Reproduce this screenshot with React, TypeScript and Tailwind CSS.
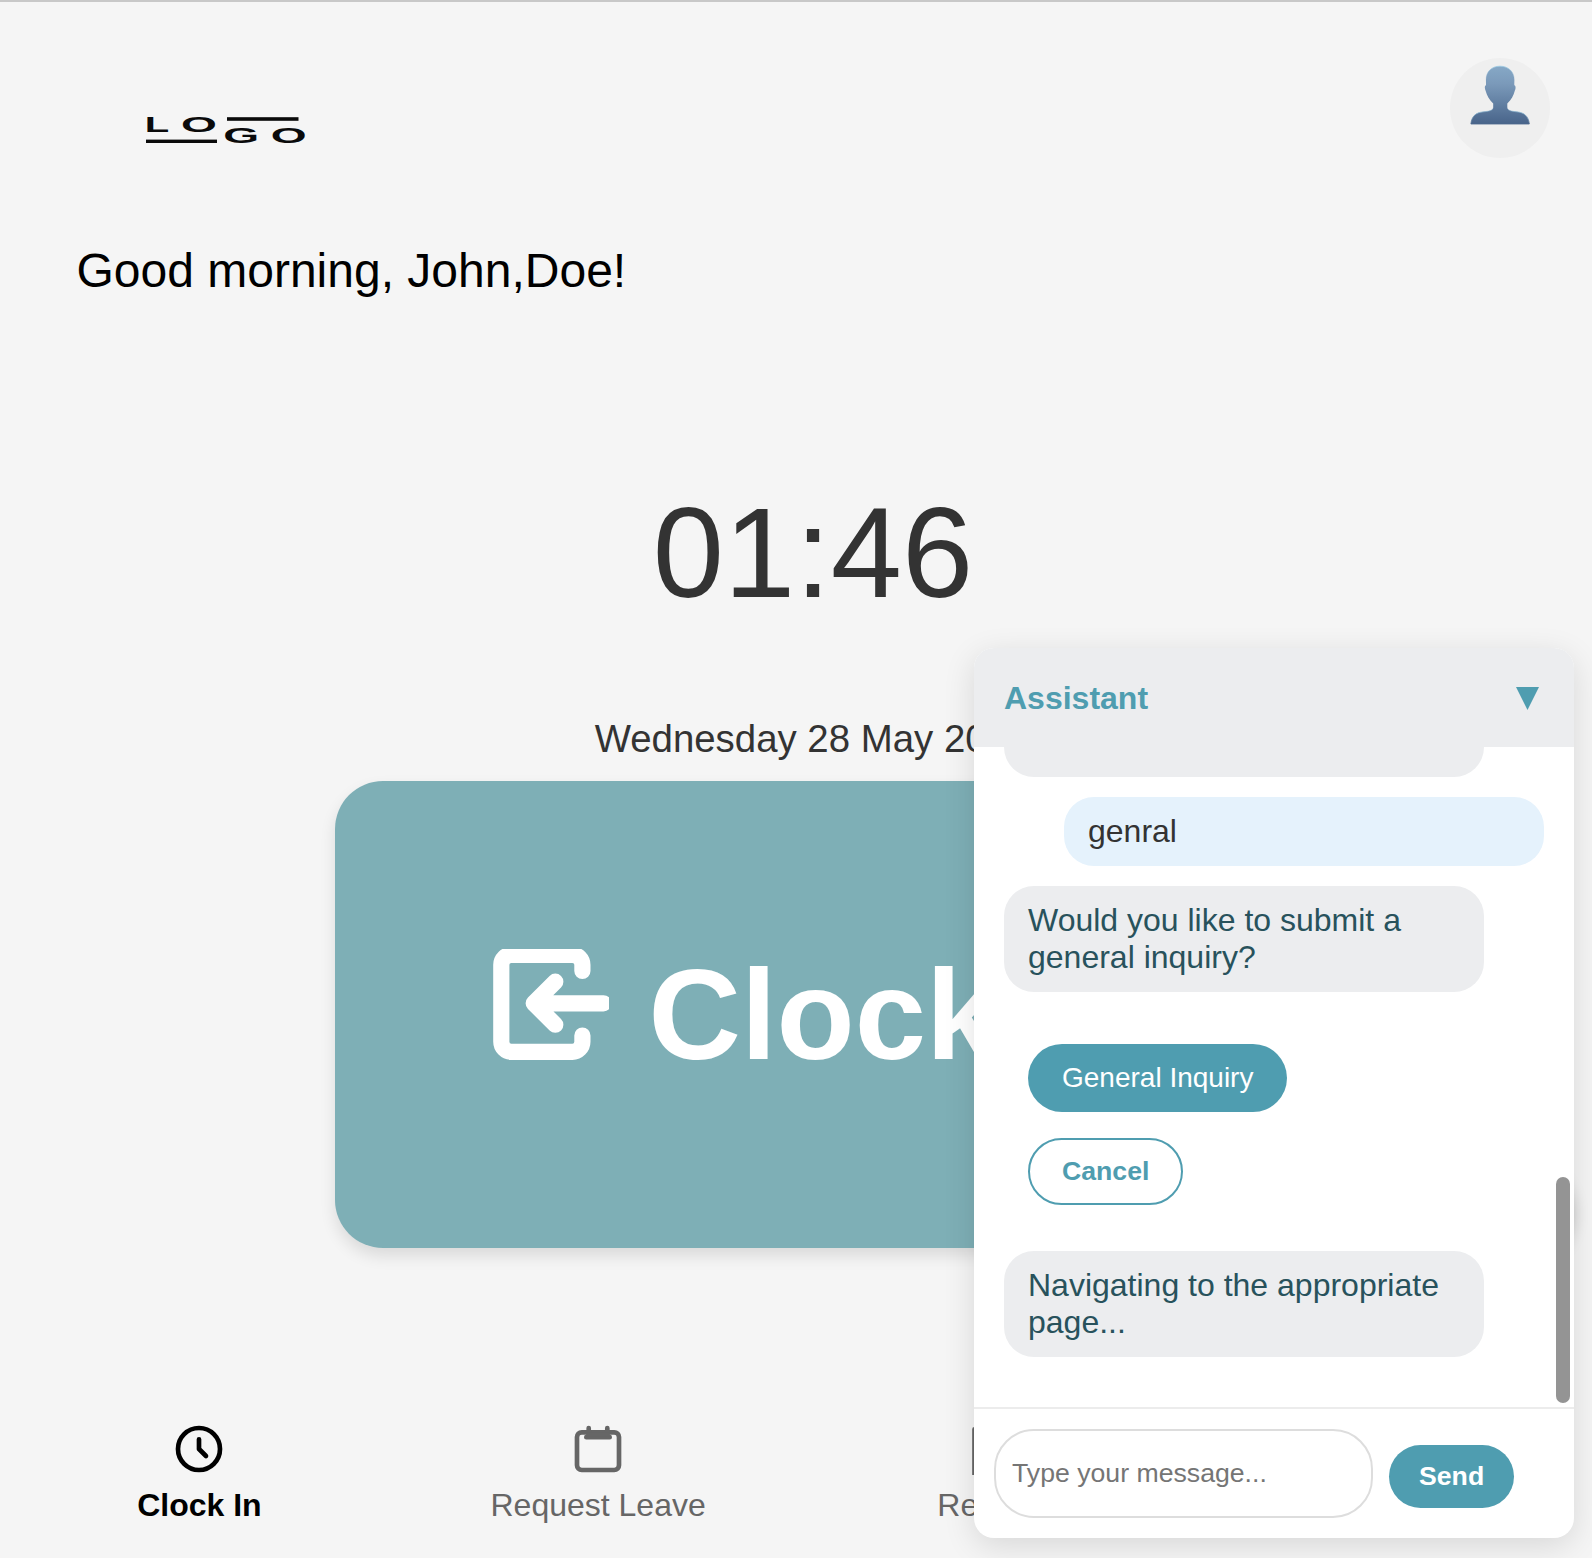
import React from "react";

function Logo() {
  return (
    <svg className="h-8 w-41 overflow-visible" viewBox="0 0 164 32" fill="#0a0a0a" fontFamily="'Liberation Sans', Arial, sans-serif" fontSize="22.5" fontWeight="bold">
      <text transform="translate(-1.2 18) scale(1.78 1)">L</text>
      <text transform="translate(35 18) scale(2.05 1)">O</text>
      <text transform="translate(77.3 28.8) scale(2.05 1)">G</text>
      <text transform="translate(124.7 28.8) scale(2.05 1)">O</text>
      <rect x="81" y="3.2" width="71.5" height="3.6" />
      <rect x="0" y="25.6" width="71" height="3.4" />
    </svg>
  );
}

function Avatar() {
  return (
    <div className="flex size-[100px] justify-center rounded-full bg-[#efefef] pt-[7px]">
      <svg className="h-[60px] w-[60px]" viewBox="0 0 60 60">
        <defs>
          <linearGradient id="bust" x1="0" y1="0" x2="0" y2="1">
            <stop offset="0" stopColor="#86a8c6" />
            <stop offset="0.3" stopColor="#7b9aba" />
            <stop offset="1" stopColor="#48648a" />
          </linearGradient>
          <linearGradient id="rim" x1="0" y1="0" x2="0" y2="1">
            <stop offset="0" stopColor="#9ccbe4" />
            <stop offset="0.3" stopColor="#7b9aba" stopOpacity="0" />
            <stop offset="0.7" stopColor="#7b9aba" stopOpacity="0" />
            <stop offset="0.8" stopColor="#8fbcd6" />
            <stop offset="1" stopColor="#48648a" />
          </linearGradient>
        </defs>
        <path
          d="M30 1.200C38.500 1.200 44.300 6.800 44.300 15V20.300C45.900 20.800 45.900 23.500 44.800 25.800C43.500 31 41.500 34.500 37.300 38.500V42.500C37.300 45.500 41.500 46.300 47 46.800C54 47.500 58.500 51 59.300 59H.9C1.700 51 6 47.500 13.200 46.800C18.700 46.300 23.200 45.500 23.200 42.500V38.500C19 34.500 17 31 15.600 25.800C14.500 23.500 14.500 20.800 16 20.300V15C16 6.800 21.500 1.200 30 1.200Z"
          fill="url(#bust)" stroke="url(#rim)" strokeWidth="0.8"
        />
      </svg>
    </div>
  );
}

function EnterIcon() {
  return (
    <svg className="-mt-[3px] size-32 shrink-0" viewBox="0 0 128 128" fill="none" stroke="#fff" strokeWidth="16.200" strokeLinecap="round" strokeLinejoin="round">
      <path d="M101.400 22V15.800A10 10 0 0 0 91.400 5.800H30.300A10 10 0 0 0 20.300 15.800V92.800A10 10 0 0 0 30.300 102.800H91.400A10 10 0 0 0 101.400 92.800V86.500" />
      <path d="M122.500 54.300H53M74.300 32.700L52.700 54.300L74.300 75.700" />
    </svg>
  );
}

function ClockIcon() {
  return (
    <svg className="size-[52px]" viewBox="0 0 52 52" fill="none" stroke="currentColor" strokeWidth="4.670" strokeLinecap="round" strokeLinejoin="round">
      <circle cx="26" cy="26" r="21" />
      <path d="M26 16.300V26L33 33" />
    </svg>
  );
}

function CalendarIcon() {
  return (
    <svg className="size-[52px]" viewBox="0 0 52 52" fill="none" stroke="currentColor" strokeWidth="4.670" strokeLinecap="round" strokeLinejoin="round">
      <rect x="5" y="9.300" width="42" height="37.700" rx="4.700" />
      <path d="M16.700 5V14M35.300 5V14M14.300 14.200H37.700" />
      <path d="M14.300 11.500H37.700" strokeLinecap="butt" />
    </svg>
  );
}

function RecordsIcon() {
  return (
    <svg className="size-[52px]" viewBox="0 0 52 52" fill="none" stroke="currentColor" strokeWidth="4.670" strokeLinecap="butt" strokeLinejoin="round">
      <path d="M3.500 54V6.300H45.500V54Z" />
    </svg>
  );
}

function ProfileIcon() {
  return (
    <svg className="size-[52px]" viewBox="0 0 52 52" fill="none" stroke="currentColor" strokeWidth="4.670" strokeLinecap="round">
      <circle cx="26" cy="18" r="9" />
      <path d="M9 46C9 28 43 28 43 46" />
    </svg>
  );
}

const tabs = [
  { label: "Clock In", icon: ClockIcon, active: true },
  { label: "Request Leave", icon: CalendarIcon, active: false },
  { label: "Records", icon: RecordsIcon, active: false },
  { label: "Profile", icon: ProfileIcon, active: false },
];

function TabBar() {
  return (
    <nav className="grid w-[1595px] grid-cols-4 pt-[175px]">
      {tabs.map(({ label, icon: Icon, active }) => (
        <div key={label} className={active ? "flex flex-col items-center font-bold text-black" : "flex flex-col items-center text-[#666]"}>
          <Icon />
          <span className="mt-3 text-[32px] leading-9">{label}</span>
        </div>
      ))}
    </nav>
  );
}

function BotMessage({ children }: { children: React.ReactNode }) {
  return (
    <div className="w-[480px] rounded-[30px] bg-[#ecedef] px-6 py-4 text-[32px] leading-[37px] text-[#28525c]">{children}</div>
  );
}

function ChatPanel() {
  return (
    <section className="absolute right-[18px] bottom-5 flex h-[890px] w-[600px] flex-col overflow-hidden rounded-[20px] bg-white shadow-[0_8px_32px_rgba(0,0,0,0.12)]">
      <header className="flex h-[99px] shrink-0 items-center justify-between bg-[#ecedef] pr-[35px] pl-[30px] text-[#4f9db0]">
        <h2 className="text-[32px] leading-9 font-bold">Assistant</h2>
        <svg className="mt-px h-[23px] w-[23px]" viewBox="0 0 23 23" fill="currentColor">
          <path d="M0 0H23L11.500 23Z" />
        </svg>
      </header>
      <div className="relative flex min-h-0 flex-1 flex-col px-[30px]">
        <div className="h-[30px] w-[480px] rounded-b-[30px] bg-[#ecedef]" />
        <div className="mt-5 w-[480px] self-end rounded-[30px] bg-[#e5f2fc] px-6 py-4 text-[32px] leading-[37px] text-[#333]">genral</div>
        <div className="mt-5">
          <BotMessage>Would you like to submit a general inquiry?</BotMessage>
        </div>
        <div className="mt-[52px] flex flex-col items-start gap-[26px] pl-6">
          <button className="h-[68px] rounded-[34px] bg-[#4f9db0] px-[34px] text-[28px] leading-8 text-white">General Inquiry</button>
          <button className="h-[67px] rounded-[34px] border-2 border-[#4f9db0] px-8 text-[26.667px] leading-[31px] font-bold text-[#4f9db0]">Cancel</button>
        </div>
        <div className="mt-[46px]">
          <BotMessage>Navigating to the appropriate page...</BotMessage>
        </div>
        <div className="absolute top-[430px] right-1 h-[226px] w-3.5 rounded-full bg-[#949494]" />
      </div>
      <form className="flex h-[131px] shrink-0 items-center gap-4 border-t-2 border-[#ececec] px-5">
        <input
          className="h-[89px] w-[379px] rounded-[40px] border-2 border-[#ddd] px-4 text-[26.667px] outline-none placeholder:text-[#757575]"
          placeholder="Type your message..."
        />
        <button type="button" className="mt-1.5 h-[63px] rounded-[32px] bg-[#4f9db0] px-[30px] text-[26.667px] leading-[31px] font-bold text-white">Send</button>
      </form>
    </section>
  );
}

export default function App() {
  return (
    <div className="relative h-[1558px] w-[1592px] overflow-hidden border-t-2 border-[#c8c8c8] bg-[#f5f5f5] font-['Liberation_Sans',Arial,sans-serif]">
      <header className="flex h-[184px] items-start justify-between pt-14 pr-[42px] pl-[146px]">
        <div className="pt-14">
          <Logo />
        </div>
        <Avatar />
      </header>
      <h1 className="mt-[58px] pl-[76.500px] text-[48px] leading-[54px] text-black">Good morning, John,Doe!</h1>
      <main className="flex flex-col items-center pl-8 text-[#333]">
        <div className="mt-[183px] pl-0.5 text-[128px] leading-[144px]">01:46</div>
        <div className="mt-[92px] text-[38.400px] leading-[44px]">Wednesday 28 May 2025</div>
        <button className="mt-5 flex h-[467px] w-[954px] items-center justify-center gap-10 rounded-[48px] bg-[#7eafb6] pl-[3px] text-[128px] leading-[144px] font-bold text-white shadow-[0_8px_16px_rgba(0,0,0,0.11)]">
          <EnterIcon />
          <span>Clock In</span>
        </button>
      </main>
      <TabBar />
      <div className="absolute right-[19px] bottom-[302px] size-[100px] rounded-full bg-[#4f9db0] shadow-[0_8px_16px_rgba(0,0,0,0.22)]" />
      <ChatPanel />
    </div>
  );
}
